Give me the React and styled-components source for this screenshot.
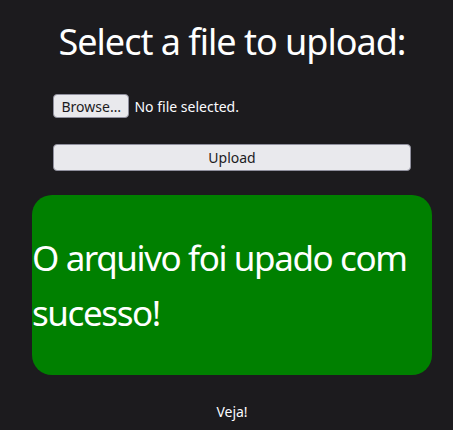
import React from "react";
import styled, { createGlobalStyle } from "styled-components";

const GlobalStyle = createGlobalStyle`
  body {
    margin: 0;
    background: #1c1b1e;
    color: #fbfbfe;
    font-family: "Noto Sans", "Open Sans", sans-serif;
  }
`;

const Page = styled.div`
  width: 400px;
  margin-left: 32px;
  display: flex;
  flex-direction: column;
`;

const Title = styled.h1`
  margin: 18px 0 0;
  font-size: 36px;
  font-weight: 400;
  line-height: 48px;
  letter-spacing: -1px;
  text-align: center;
  color: #fff;
`;

const Form = styled.form`
  margin: 28px 0 0 21px;
  width: 358px;
  display: flex;
  flex-direction: column;
  gap: 26px;
`;

const FileRow = styled.div`
  display: flex;
  align-items: center;
  gap: 5px;
  font-size: 14px;
`;

const Button = styled.button`
  font-family: inherit;
  font-size: 14px;
  color: #1c1b1e;
  background: #e9e9ed;
  border: 1px solid #8f8f9d;
  border-radius: 4px;
  padding: 0 7.5px;
  height: ${(p) => p.$h}px;
  width: ${(p) => (p.$full ? "100%" : "auto")};
  cursor: pointer;
`;

const Status = styled.span`
  color: #fbfbfe;
`;

const Success = styled.div`
  margin-top: 24px;
  height: 180px;
  background: #008000;
  border-radius: 20px;
  display: flex;
  align-items: center;
  font-size: 35px;
  line-height: 55px;
  letter-spacing: -1.4px;
  color: #fff;
`;

const Footer = styled.p`
  margin: 27px 0 0;
  text-align: center;
  font-size: 14px;
  color: #fbfbfe;
`;

const App = () => {
  return (
    <>
      <GlobalStyle />
      <Page>
        <Title>Select a file to upload:</Title>
        <Form onSubmit={(e) => e.preventDefault()}>
          <FileRow>
            <Button type="button" $h={24}>Browse…</Button>
            <Status>No file selected.</Status>
          </FileRow>
          <Button type="submit" $h={27} $full>Upload</Button>
        </Form>
        <Success>O arquivo foi upado com sucesso!</Success>
        <Footer>Veja!</Footer>
      </Page>
    </>
  );
};

export default App;
